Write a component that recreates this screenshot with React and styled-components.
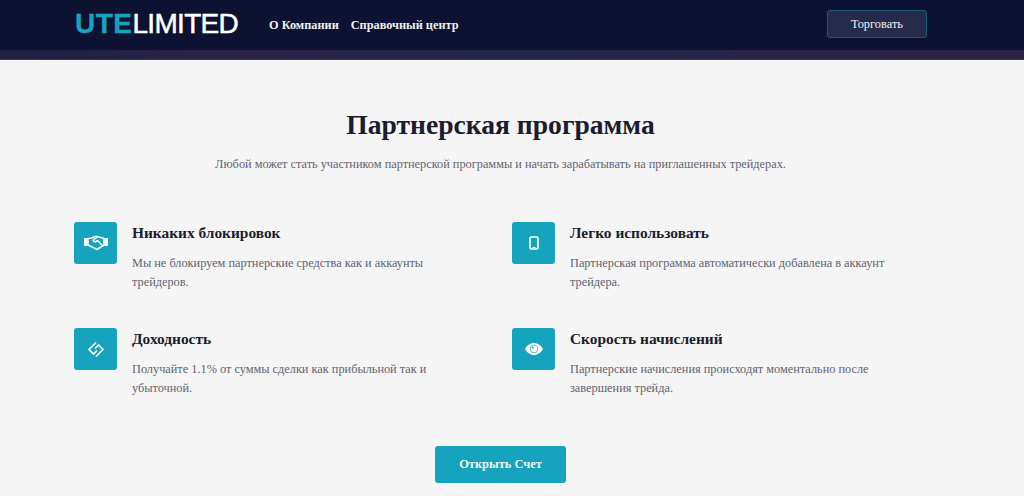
import React from 'react';
import styled, { createGlobalStyle } from 'styled-components';

const GlobalStyle = createGlobalStyle`
  html, body {
    margin: 0;
    padding: 0;
    background: #f5f5f5;
    font-family: "Liberation Serif", "Times New Roman", serif;
    overflow: hidden;
  }
`;

const Header = styled.header`
  background: #0d1232;
`;

const HeaderInner = styled.div`
  height: 50px;
  padding: 0 97px 0 75px;
  display: flex;
  align-items: center;
`;

const Logo = styled.div`
  font-family: "Liberation Sans", Arial, sans-serif;
  font-size: 28px;
  line-height: 28px;
  color: #fff;
  width: 194px;
  margin-top: -3px;
  white-space: nowrap;
`;

const LogoAccent = styled.span`
  color: #16a3bd;
  font-weight: 700;
  -webkit-text-stroke: 0.3px #16a3bd;
  letter-spacing: 0.5px;
`;

const LogoRest = styled.span`
  font-weight: 400;
  -webkit-text-stroke: 0.5px #fff;
  letter-spacing: -0.7px;
`;

const Nav = styled.nav`
  display: flex;
  gap: 12px;
  flex: 1;
`;

const NavLink = styled.a`
  color: #f1f1f1;
  font-size: 12.3px;
  font-weight: 700;
`;

const TradeButton = styled.button`
  width: 100px;
  height: 28px;
  margin-top: -2px;
  background: #272b4b;
  border: 1px solid #1b5a74;
  border-radius: 3px;
  color: #f1f1f1;
  font-family: inherit;
  font-size: 12.4px;
  padding: 0;
`;

const Strip = styled.div`
  height: 10px;
  background: linear-gradient(90deg, #1f1f42 0%, #2c2248 25%, #22264a 50%, #2a2348 75%, #2c2245 100%);
  border-bottom: 1px solid #3a3a55;
  box-sizing: border-box;
`;

const Main = styled.main`
  width: 1001px;
  display: flex;
  flex-direction: column;
  align-items: center;
`;

const Title = styled.h1`
  margin: 48px 0 0;
  font-size: 27.6px;
  line-height: 34px;
  font-weight: 700;
  color: #1a1c30;
`;

const Lead = styled.p`
  margin: 13px 0 0;
  font-size: 12.3px;
  line-height: 18px;
  color: #5f6472;
`;

const Grid = styled.div`
  margin-top: 49px;
  width: 100%;
  box-sizing: border-box;
  padding-left: 74px;
  display: grid;
  grid-template-columns: 438px 438px;
  row-gap: 22px;
`;

const Feature = styled.div`
  display: flex;
  gap: 15px;
  height: 84px;
`;

const IconBox = styled.div`
  width: 43px;
  height: 42px;
  flex: none;
  border-radius: 3px;
  background: #16a3bd;
  display: flex;
  align-items: center;
  justify-content: center;
`;

const FeatureText = styled.div`
  width: 330px;
`;

const FeatureTitle = styled.h3`
  margin: 1px 0 0;
  font-size: 15.4px;
  line-height: 20px;
  font-weight: 700;
  color: #1a1c30;
`;

const FeatureBody = styled.p`
  margin: 11px 0 0;
  font-size: 12.3px;
  line-height: 19px;
  color: #5f6472;
`;

const OpenButton = styled.button`
  margin-top: 34px;
  width: 131px;
  height: 37px;
  border: none;
  border-radius: 3px;
  background: #16a3bd;
  color: #f5f5f5;
  font-family: inherit;
  font-size: 12.4px;
  font-weight: 700;
  padding: 0;
`;

const HandshakeIcon = () => (
  <svg width="24" height="16" viewBox="0 0 24 16" fill="none">
    <path d="M0 3h3.500v8H0z M20.500 3H24v8h-3.500z" fill="#fff" />
    <path d="M4 3.500 8 3l3-1.500h2L20 3.500v6.500l-7 4.500-3-1.500-6-3z" stroke="#fff" strokeWidth="1.500" strokeLinejoin="round" />
    <path d="M13 2 9 5.500l2 1.500 2.500-1.500L18 10" stroke="#fff" strokeWidth="1.500" strokeLinejoin="round" />
  </svg>
);

const DiamondLinkIcon = () => (
  <svg width="18" height="17" viewBox="0 0 18 17" fill="none" stroke="#fff" strokeWidth="1.700">
    <path d="M9 1.500 2 8.500 6.500 13 10 9.500" />
    <path d="M9 15.500 16 8.500 11.500 4 8 7.500" />
  </svg>
);

const PhoneIcon = () => (
  <svg width="10" height="14" viewBox="0 0 10 14" fill="none">
    <rect x="1" y="1" width="8" height="12" rx="1.500" stroke="#fff" strokeWidth="1.600" />
    <rect x="3.500" y="11" width="3" height="1.200" fill="#fff" />
  </svg>
);

const EyeIcon = () => (
  <svg width="18" height="12" viewBox="0 0 18 12">
    <path
      fillRule="evenodd"
      fill="#fff"
      d="M0 6C2 2.500 5.200 0 9 0s7 2.500 9 6c-2 3.500-5.200 6-9 6S2 9.500 0 6zm9-4a4 4 0 1 0 0 8 4 4 0 0 0 0-8z"
    />
    <circle cx="9" cy="6" r="3.400" fill="#fff" />
    <circle cx="7.600" cy="4.600" r="1" fill="#16a3bd" />
  </svg>
);

const features = [
  {
    icon: <HandshakeIcon />,
    title: 'Никаких блокировок',
    lines: ['Мы не блокируем партнерские средства как и аккаунты', 'трейдеров.'],
  },
  {
    icon: <PhoneIcon />,
    title: 'Легко использовать',
    lines: ['Партнерская программа автоматически добавлена в аккаунт', 'трейдера.'],
  },
  {
    icon: <DiamondLinkIcon />,
    title: 'Доходность',
    lines: ['Получайте 1.1% от суммы сделки как прибыльной так и', 'убыточной.'],
  },
  {
    icon: <EyeIcon />,
    title: 'Скорость начислений',
    lines: ['Партнерские начисления происходят моментально после', 'завершения трейда.'],
  },
];

const App = () => (
  <>
    <GlobalStyle />
    <Header>
      <HeaderInner>
        <Logo>
          <LogoAccent>UTE</LogoAccent>
          <LogoRest>LIMITED</LogoRest>
        </Logo>
        <Nav>
          <NavLink>О Компании</NavLink>
          <NavLink>Справочный центр</NavLink>
        </Nav>
        <TradeButton>Торговать</TradeButton>
      </HeaderInner>
      <Strip />
    </Header>
    <Main>
      <Title>Партнерская программа</Title>
      <Lead>Любой может стать участником партнерской программы и начать зарабатывать на приглашенных трейдерах.</Lead>
      <Grid>
        {features.map(f => (
          <Feature key={f.title}>
            <IconBox>{f.icon}</IconBox>
            <FeatureText>
              <FeatureTitle>{f.title}</FeatureTitle>
              <FeatureBody>
                {f.lines[0]}
                <br />
                {f.lines[1]}
              </FeatureBody>
            </FeatureText>
          </Feature>
        ))}
      </Grid>
      <OpenButton>Открыть Счет</OpenButton>
    </Main>
  </>
);

export default App;
